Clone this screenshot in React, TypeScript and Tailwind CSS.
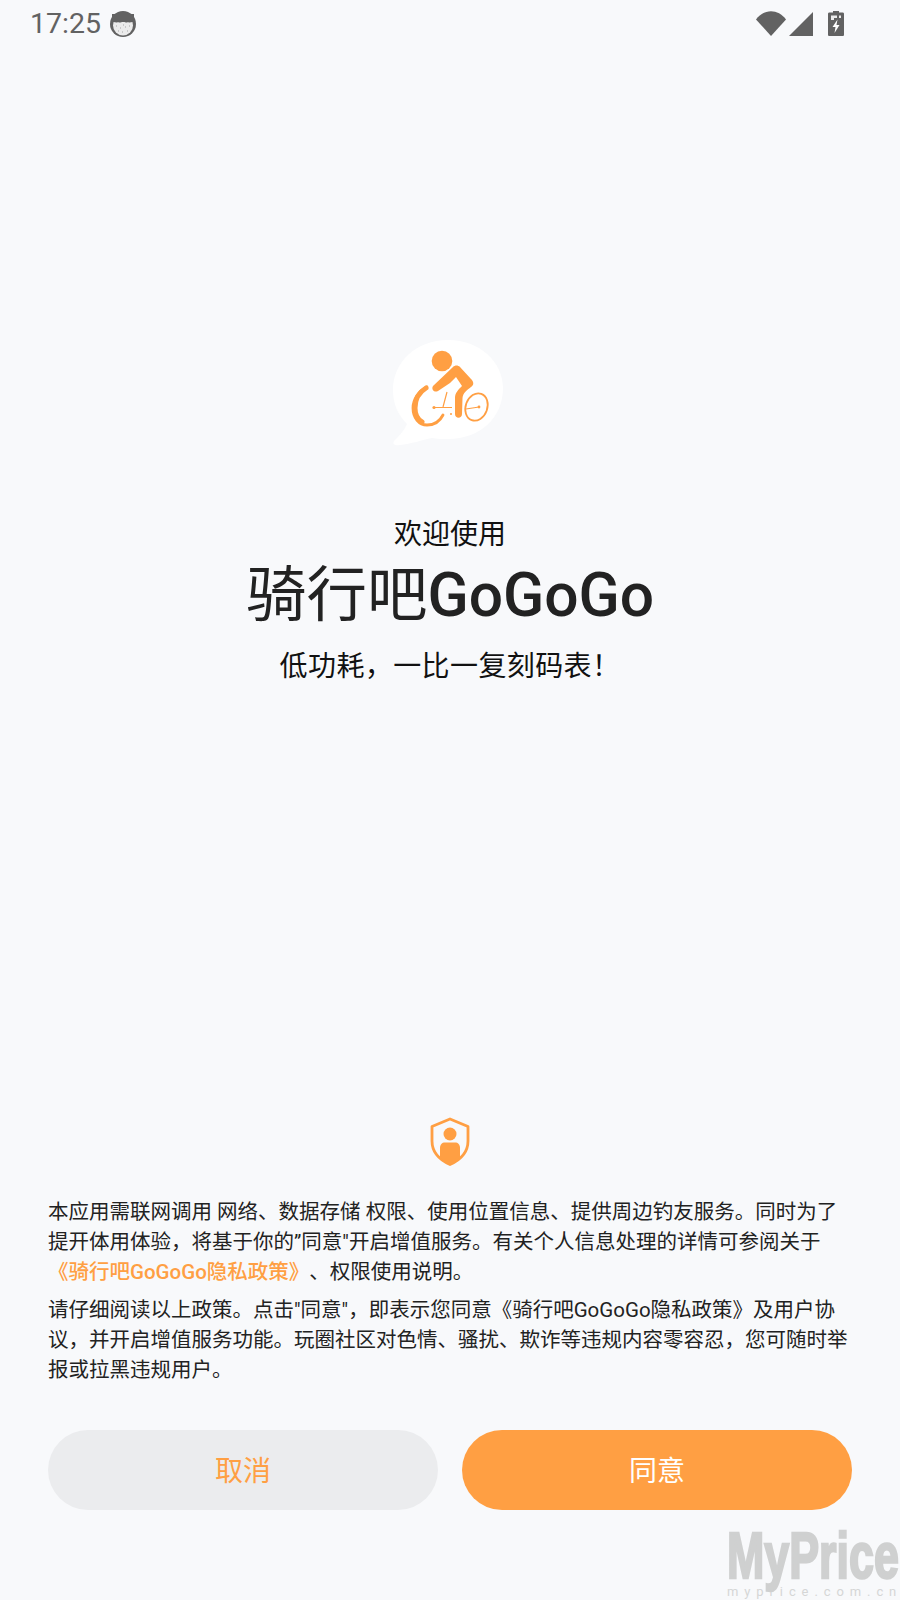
const F = '"Roboto","Noto Sans CJK SC",sans-serif';

function Logo() {
  return (
    <svg width="130" height="120" viewBox="0 0 130 120" className="-ml-[10px] block">
      <path d="M68 10C36 10 13 32 13 60C13 74 18 85 27 94C24 101 19 106 14 111C12 114 15 116 20 115C31 114 42 110 52 108C57 109 62 109 68 109C100 109 123 88 123 58C123 32 100 10 68 10Z" fill="#ffffff" />
      <circle cx="62" cy="31" r="10.300" fill="#ff9f43" />
      <path d="M53 56L73 37C75 35 78 35 80 37L91 49C94 52 94 55 91 57C87 60 83 63 82.500 68L82 84C82 89 75 89 75 84L75 68C75 63 78 60 82 56L76 47L70 53L58 61C54 63 51 59 53 56Z" fill="#ff9f43" />
      <path d="M47 57C38 61 33 70 33 78C33 88 39 95 47 95C54 95 60 91 63 85" fill="none" stroke="#ff9f43" strokeWidth="2.800" strokeLinecap="round" />
      <path d="M46 58C38 63 35 71 35 78C35 84 37 89 42 92" fill="none" stroke="#ff9f43" strokeWidth="5" strokeLinecap="round" />
      <ellipse cx="96.500" cy="77" rx="10.800" ry="14" transform="rotate(20 96.500 77)" fill="none" stroke="#ff9f43" strokeWidth="1.800" />
      <path d="M54 77.500H72M67 62L63 77M86 79L99 77" stroke="#ff9f43" strokeWidth="1.200" fill="none" />
      <circle cx="54" cy="77.500" r="1.600" fill="#ff9f43" />
      <circle cx="71" cy="84" r="1" fill="#ff9f43" />
      <circle cx="99" cy="77" r="1.400" fill="#ff9f43" />
    </svg>
  );
}

function Shield() {
  return (
    <svg width="42" height="50" viewBox="0 0 42 50" className="block">
      <path d="M21 2L39 9.500V24C39 35 31 43 21 47.500C11 43 3 35 3 24V9.500Z" fill="none" stroke="#ff9f43" strokeWidth="2.800" strokeLinejoin="round" />
      <circle cx="21" cy="17" r="6.500" fill="#ff9f43" />
      <path d="M11 31C11 27.500 13 25.500 16 25.500H26C29 25.500 31 27.500 31 31V40C28 44 24 46.500 21 47.500C18 46.500 14 44 11 40Z" fill="#ff9f43" />
    </svg>
  );
}

export default function App() {
  return (
    <div className="relative flex h-[1600px] w-[900px] flex-col overflow-hidden bg-[#f8f9fb]" style={{ fontFamily: F }}>
      <div className="flex h-[48px] items-center justify-between pl-[30px] pr-[56px]">
        <div className="flex items-center gap-[9px]">
          <span className="text-[28.5px] leading-[48px] text-[#626262]">17:25</span>
          <svg width="26" height="26" viewBox="0 0 26 26">
            <circle cx="13" cy="13" r="13" fill="#626262" />
            <circle cx="13" cy="14.500" r="10" fill="#ebebeb" />
            <path d="M2 11.500C4 10 6 12.500 8 11C10 12.500 12 10.500 13 11C15 10.500 16 12.500 18 11C20 12.500 22 10 24 11.500V3H2Z" fill="#626262" />
            <path d="M6 15h1M10 17h1M15 16h1M19 15h1M8 20h1M12 21h1M17 20h1M13 14h1" stroke="#a5a5a5" strokeWidth="1" />
          </svg>
        </div>
        <div className="flex items-center gap-[3px]">
          <svg width="30" height="25" viewBox="0 0 30 25" className="mt-[-1px]">
            <path d="M0 8.500C8 -2.500 22 -2.500 30 8.500L15 25Z" fill="#626262" />
          </svg>
          <svg width="24" height="24" viewBox="0 0 24 24">
            <path d="M0 24L24 0V24Z" fill="#626262" />
          </svg>
          <svg width="16" height="25" viewBox="0 0 16 25" className="ml-[12px] mt-[-2px]">
            <path d="M5 0H11V1.500H14.500C15.500 1.500 16 2 16 3V23.500C16 24.500 15.500 25 14.500 25H1.500C.5 25 0 24.500 0 23.500V3C0 2 .5 1.500 1.500 1.500H5Z" fill="#626262" />
            <path d="M3 4.500H9V7H6V9H3ZM11 4.500H13V7H11Z" fill="#ececec" />
            <path d="M9.500 8.500L4.500 16H7.500L6.500 22L11.500 14H8.500Z" fill="#ffffff" />
          </svg>
        </div>
      </div>

      <div className="mt-[282px] flex flex-col items-center">
        <Logo />
        <div className="mt-[65px] text-[28px] leading-[40px] text-[#111]">欢迎使用</div>
        <div className="mt-[3px] text-[60.5px] leading-[76px] text-[#222]">骑行吧<span className="font-medium">GoGoGo</span></div>
        <div className="mt-[13px] text-[28px] leading-[40px] tracking-[0.4px] text-[#111]">低功耗，一比一复刻码表！</div>
      </div>

      <div className="mt-auto flex flex-col px-[48px] pb-[90px]">
        <div className="flex justify-center"><Shield /></div>
        <div className="mt-[30px] text-[20.5px] leading-[30px] text-[#222] [text-spacing-trim:space-all]">
          <p>本应用需联网调用 网络、数据存储 权限、使用位置信息、提供周边钓友服务。同时为了提开体用体验，将基于你的”同意"开启增值服务。有关个人信息处理的详情可参阅关于<span className="font-medium text-[#ff9f43]">《骑行吧GoGoGo隐私政策》</span>、权限使用说明。</p>
          <p className="mt-[8px]">请仔细阅读以上政策。点击"同意"，即表示您同意《骑行吧GoGoGo隐私政策》及用户协议，并开启增值服务功能。玩圈社区对色情、骚扰、欺诈等违规内容零容忍，您可随时举报或拉黑违规用户。</p>
        </div>
        <div className="mt-[45px] flex justify-between">
          <div className="flex h-[80px] w-[390px] items-center justify-center rounded-full bg-[#ebecee] pt-[3px] text-[28px] text-[#ff9f43]">取消</div>
          <div className="flex h-[80px] w-[390px] items-center justify-center rounded-full bg-[#ff9f43] pt-[3px] text-[28px] text-white">同意</div>
        </div>
      </div>

      <div className="absolute left-[727px] top-[1528px] flex flex-col">
        <div className="origin-left scale-x-[0.70] text-[64px] leading-[56px] font-bold whitespace-nowrap text-[#cfd0d0] [-webkit-text-stroke:2.5px_#cfd0d0]" style={{ fontFamily: '"Liberation Sans",sans-serif' }}>MyPrice</div>
        <div className="text-[13px] leading-[16px] tracking-[5.9px] whitespace-nowrap text-[#d5d6d6]">myprice.com.c<span className="tracking-normal">n</span></div>
      </div>
    </div>
  );
}
